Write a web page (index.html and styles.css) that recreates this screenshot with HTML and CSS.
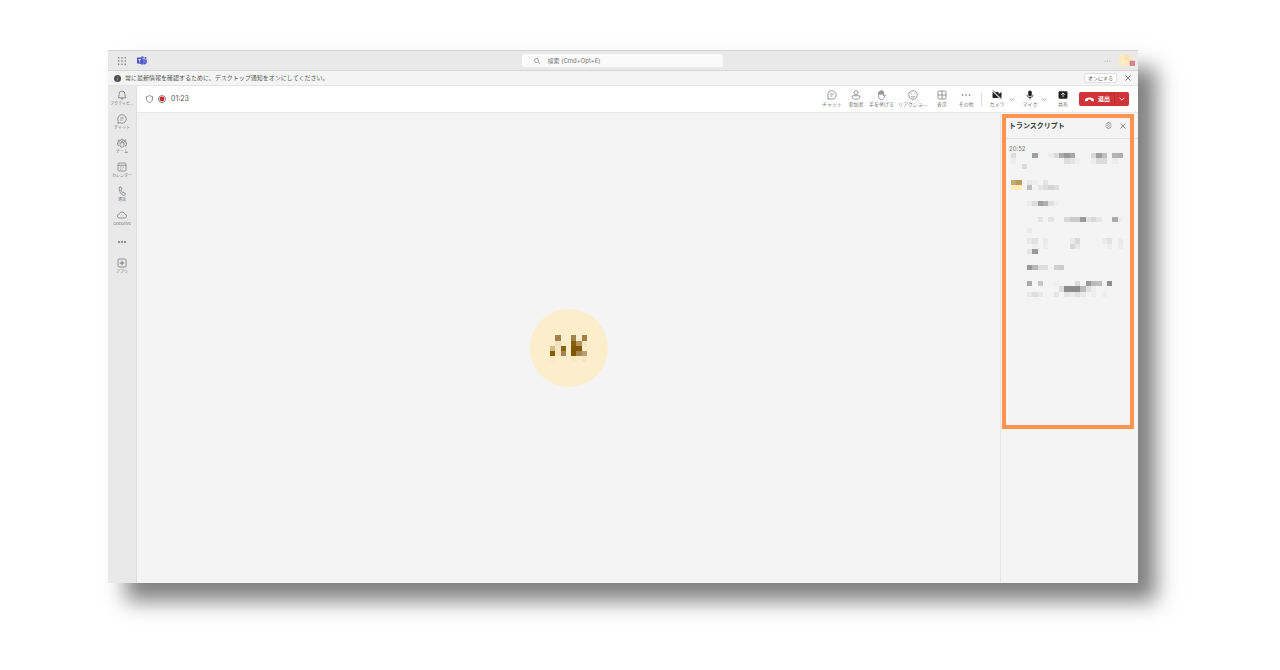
FILE: index.html
```html
<!DOCTYPE html>
<html lang="ja">
<head>
  <meta charset="UTF-8">
  <title>Teams</title>
  <meta name="viewport" content="width=device-width, initial-scale=1.0">
  <link rel="stylesheet" href="styles.css">
</head>
<body>
  <div class="window">
    <header class="titlebar">
      <div class="titlebar-left">
        <button class="icon-button" aria-label="アプリ起動ツール">
          <svg width="8" height="8" viewBox="0 0 8 8" fill="#888">
            <path d="M0 0h1.4v1.4H0zM3.3 0h1.4v1.4H3.3zM6.6 0H8v1.4H6.6zM0 3.3h1.4v1.4H0zM3.3 3.3h1.4v1.4H3.3zM6.6 3.3H8v1.4H6.6zM0 6.6h1.4V8H0zM3.3 6.6h1.4V8H3.3zM6.6 6.6H8V8H6.6z"/>
          </svg>
        </button>
        <svg class="logo" width="10" height="9" viewBox="0 0 20 18">
          <circle cx="17" cy="4" r="2.2" fill="#5b5fd0"/>
          <circle cx="11" cy="3" r="3" fill="#7b83eb"/>
          <path d="M12 7h7.500v5.500a3.500 3.500 0 0 1-7.500 1z" fill="#5b5fd0"/>
          <path d="M6 6.500h9.500V13a5 5 0 0 1-9.500 1.500z" fill="#6b72dd"/>
          <rect x="0" y="3" width="11" height="12" rx="1" fill="#4b53bc"/>
          <path d="M2.800 6h5.400v1.600H6.300V12.500H4.700V7.600H2.800z" fill="#fff"/>
        </svg>
      </div>
      <label class="search">
        <svg width="6" height="6" viewBox="0 0 12 12" fill="none" stroke="#888" stroke-width="1.5"><circle cx="5" cy="5" r="4"/><path d="M8 8l3.500 3.500"/></svg>
        <input type="text" aria-label="検索" placeholder="検索 (Cmd+Opt+E)">
      </label>
      <div class="titlebar-right">
        <button class="icon-button" aria-label="設定など">
          <svg width="7" height="2" viewBox="0 0 7 2" fill="#999"><circle cx="1" cy="1" r=".6"/><circle cx="3.500" cy="1" r=".6"/><circle cx="6" cy="1" r=".6"/></svg>
        </button>
        <svg class="profile" width="16" height="11" viewBox="0 0 3 2" preserveAspectRatio="none">
          <path d="M0 0h2v2H0z" fill="#fdebc0"/><path d="M1 0h1v1H1z" fill="#f8e3b0"/><path d="M2 1h1v1H2z" fill="#d9828a"/><path d="M2 0h1v1H2z" fill="#efe9dc"/>
        </svg>
      </div>
    </header>

    <div class="banner">
      <svg width="7" height="7" viewBox="0 0 14 14"><circle cx="7" cy="7" r="7" fill="#505050"/><path d="M6.300 6h1.400v5H6.300zM6.300 3.200h1.400v1.500H6.300z" fill="#aaa"/></svg>
      <span class="banner-text">常に最新情報を確認するために、デスクトップ通知をオンにしてください。</span>
      <button class="banner-action">オンにする</button>
      <button class="icon-button" aria-label="閉じる">
        <svg width="6" height="6" viewBox="0 0 6 6" stroke="#666" stroke-width=".8"><path d="M.5.5l5 5M5.500.5l-5 5"/></svg>
      </button>
    </div>

    <div class="body">
      <nav class="rail">
        <a href="#" class="rail-item">
          <svg class="icon" viewBox="0 0 20 20"><path d="M10 2a6 6 0 0 0-6 6v4l-1.500 3.500h15L16 12V8a6 6 0 0 0-6-6zM7.500 16a2.500 2.500 0 0 0 5 0"/></svg>
          アクティビ...
        </a>
        <a href="#" class="rail-item">
          <svg class="icon" viewBox="0 0 20 20"><path d="M10 1.500a8.500 8.500 0 1 1-4 16L1.500 18.500l1.200-4.300A8.500 8.500 0 0 1 10 1.500zM6.500 8h7M6.500 12h4.500"/></svg>
          チャット
        </a>
        <a href="#" class="rail-item">
          <svg class="icon" viewBox="0 0 20 20"><circle cx="10" cy="4.500" r="2.500"/><circle cx="3.800" cy="5.500" r="1.800"/><circle cx="16.200" cy="5.500" r="1.800"/><path d="M6 9.500h8v5a4 4 0 0 1-8 0zM4 15.500a3.500 3.500 0 0 1-3-3.500V9.500h3M16 15.500a3.500 3.500 0 0 0 3-3.500V9.500h-3"/></svg>
          チーム
        </a>
        <a href="#" class="rail-item">
          <svg class="icon" viewBox="0 0 20 20"><rect x="2" y="2" width="16" height="16" rx="2.500"/><path d="M2 6.500h16M6 10h1.500M9.300 10h1.500M12.600 10h1.500M6 14h1.500M9.300 14h1.500"/></svg>
          カレンダー
        </a>
        <a href="#" class="rail-item">
          <svg class="icon" viewBox="0 0 20 20"><path d="M5 2l2.500-.5 2 4.500-2 2c.5 2.500 2 4.500 4 5.500l2.500-1 3 3.500-1.500 2.500c-6 1.500-13-8.500-10.500-16.500z"/></svg>
          通話
        </a>
        <a href="#" class="rail-item">
          <svg class="icon" viewBox="0 0 20 20"><path d="M5 16a4 4 0 0 1-.3-8A5.500 5.500 0 0 1 15.300 8 4 4 0 0 1 15 16z"/></svg>
          OneDrive
        </a>
        <button class="rail-item rail-more" aria-label="その他のアプリ">
          <svg width="8" height="2" viewBox="0 0 8 2" fill="#666"><circle cx="1" cy="1" r=".9"/><circle cx="4" cy="1" r=".9"/><circle cx="7" cy="1" r=".9"/></svg>
        </button>
        <a href="#" class="rail-item">
          <svg class="icon" viewBox="0 0 20 20"><rect x="2" y="2" width="16" height="16" rx="2"/><path d="M10 5.500v9M5.500 10h9" stroke-width="2"/></svg>
          アプリ
        </a>
      </nav>

      <main class="meeting">
        <div class="toolbar">
          <div class="status">
            <svg width="7" height="8" viewBox="0 0 14 16" fill="none" stroke="#666" stroke-width="1.400"><path d="M7 1c2 1.500 4 2 6 2v5c0 3.500-2.500 5.500-6 7-3.500-1.500-6-3.500-6-7V3c2 0 4-.5 6-2z"/></svg>
            <svg width="8" height="8" viewBox="0 0 16 16"><circle cx="8" cy="8" r="7" fill="none" stroke="#555" stroke-width="1.400"/><circle cx="8" cy="8" r="4.800" fill="#d9232e"/></svg>
            <span>01:23</span>
          </div>

          <button class="tool">
            <svg class="icon" viewBox="0 0 20 20"><path d="M10 1.500a8.500 8.500 0 1 1-4 16L1.500 18.500l1.200-4.300A8.500 8.500 0 0 1 10 1.500zM6.500 8h7M6.500 12h4.500"/></svg>
            チャット
          </button>
          <button class="tool">
            <svg class="icon" viewBox="0 0 20 20"><circle cx="10" cy="5.500" r="4"/><path d="M4 11.500h12a2 2 0 0 1 2 2c0 3-3.500 5-8 5s-8-2-8-5a2 2 0 0 1 2-2z"/></svg>
            参加者
          </button>
          <button class="tool">
            <svg class="icon" viewBox="0 0 20 20"><path d="M5 11V5a1.200 1.200 0 0 1 2.500 0v4V3A1.200 1.200 0 0 1 10 3v6-7a1.200 1.200 0 0 1 2.500 0v7-5A1.200 1.200 0 0 1 15 4v8l2-2c1-1 2.500 0 1.800 1.200L15 17c-1 1.500-2.500 2-4.500 2C7 19 5 16 5 11z"/></svg>
            手を挙げる
          </button>
          <button class="tool tool-wide">
            <svg class="icon" viewBox="0 0 20 20"><circle cx="10" cy="10" r="8.500"/><path d="M6 12c2 3 6 3 8 0M6.500 7.500h1.500M12 7.500h1.500"/></svg>
            リアクショ...
          </button>
          <button class="tool">
            <svg class="icon" viewBox="0 0 20 20"><rect x="2" y="2" width="16" height="16" rx="2.500"/><path d="M10 2v16M2 10h16"/></svg>
            表示
          </button>
          <button class="tool">
            <svg class="icon solid" viewBox="0 0 20 20"><circle cx="3" cy="10" r="1.600"/><circle cx="10" cy="10" r="1.600"/><circle cx="17" cy="10" r="1.600"/></svg>
            その他
          </button>
          <div class="divider"></div>
          <button class="tool">
            <svg class="icon solid dark" viewBox="0 0 20 20"><path d="M1 4h11a2 2 0 0 1 1.500 2v2L19 4v12l-5.500-3.500V16H3a2 2 0 0 1-2-2z"/><path d="M1 1l17 17" stroke="#fff" stroke-width="3"/><path d="M2 .8l17 17" stroke="#222" stroke-width="1.600"/></svg>
            カメラ
          </button>
          <button class="chevron" aria-label="カメラのオプション"><svg width="5" height="3" viewBox="0 0 10 6"><path d="M1 1l4 4 4-4"/></svg></button>
          <button class="tool">
            <svg class="icon solid dark" viewBox="0 0 20 20"><rect x="6.500" y="1" width="7" height="12" rx="3.500"/><path d="M4 9.500c0 7.500 12 7.500 12 0M10 15v4" fill="none" stroke="#222" stroke-width="1.600"/></svg>
            マイク
          </button>
          <button class="chevron" aria-label="マイクのオプション"><svg width="5" height="3" viewBox="0 0 10 6"><path d="M1 1l4 4 4-4"/></svg></button>
          <button class="tool">
            <svg class="icon solid dark" viewBox="0 0 20 20"><rect x="1" y="2.500" width="18" height="15" rx="2.500"/><path d="M10 14V6.500M6.500 9.500L10 6l3.500 3.500" fill="none" stroke="#fff" stroke-width="1.600"/></svg>
            共有
          </button>
          <div class="leave">
            <button class="leave-main">
              <svg width="9" height="5" viewBox="0 0 18 8" fill="#fff"><path d="M9 0c5 0 9 2 9 5 0 2-.5 3-2 2.700l-3-.7c-1-.3-1-1-1-2.500-2-.8-4-.8-6 0C6 6 6 6.700 5 7l-3 .7C.5 8 0 7 0 5c0-3 4-5 9-5z"/></svg>
              退出
            </button>
            <button class="leave-menu" aria-label="退出のオプション"><svg width="6" height="4" viewBox="0 0 10 6"><path d="M1 1l4 4 4-4"/></svg></button>
          </div>
        </div>

        <div class="content">
          <section class="stage">
            <div class="avatar">
              <svg class="mosaic" id="initials" width="37" height="27" viewBox="0 0 7 5"></svg>
            </div>
          </section>

          <aside class="transcript">
            <div class="transcript-header">
              <h2>トランスクリプト</h2>
              <button class="icon-button" aria-label="トランスクリプトの設定">
                <svg width="7" height="7" viewBox="0 0 14 14" fill="none" stroke="#777" stroke-width="1.200"><path d="M5.500 1h3l.5 1.700 1.800-.4 1.500 2.600L11.200 7l1.100 2.100-1.500 2.600-1.800-.4-.5 1.700h-3L5 11.300l-1.800.4-1.500-2.600L2.800 7 1.700 4.900l1.500-2.600 1.800.4z"/><circle cx="7" cy="7" r="2"/></svg>
              </button>
              <button class="icon-button" aria-label="閉じる">
                <svg width="6" height="6" viewBox="0 0 6 6" stroke="#666" stroke-width=".8"><path d="M.5.5l5 5M5.500.5l-5 5"/></svg>
              </button>
            </div>
            <div class="transcript-body">
              <time>20:52</time>
              <svg class="mosaic entries" id="entries" width="112" height="144" viewBox="0 0 21 27"></svg>
            </div>
            <div class="highlight"></div>
          </aside>
        </div>
      </main>
    </div>
  </div>

  <script src="script.js"></script>
</body>
</html>
```

FILE: styles.css
```css
* {
  box-sizing: border-box;
}

body {
  margin: 0;
  padding: 50px 142px 87px 108px;
  height: 100vh;
  background: #fff;
  color: #555;
  font-family: Inter, "Noto Sans CJK JP", sans-serif;
  font-size: 6px;
  line-height: 8px;
}

button {
  margin: 0;
  padding: 0;
  border: none;
  background: none;
  color: inherit;
  font: inherit;
  cursor: pointer;
}

a {
  color: inherit;
  text-decoration: none;
}

svg {
  display: block;
  flex: none;
}

.window {
  display: flex;
  flex-direction: column;
  height: 100%;
  background: #f4f4f4;
  box-shadow: 18px 18px 20px rgba(0, 0, 0, 0.5);
}

.icon-button {
  display: flex;
  align-items: center;
  justify-content: center;
}

/* title bar */
.titlebar {
  display: grid;
  grid-template-columns: 1fr 201px 1fr;
  align-items: center;
  height: 21px;
  padding-right: 2px;
  background: #e9e9e9;
  border-top: 1px solid #d4d4d4;
  border-bottom: 1px solid #d6d6d6;
}

.titlebar-left,
.titlebar-right {
  display: flex;
  align-items: center;
}

.titlebar-left {
  gap: 11px;
  padding-left: 10px;
}

.titlebar-right {
  justify-content: flex-end;
  gap: 8px;
  padding-right: 1px;
}

.search {
  display: flex;
  align-items: center;
  gap: 8px;
  height: 13px;
  padding: 0 12px;
  background: #fafafa;
  border-radius: 2px;
}

.search input {
  flex: 1;
  min-width: 0;
  padding: 0;
  border: none;
  outline: none;
  background: none;
  font: inherit;
}

.search input::placeholder {
  color: #777;
}

/* notification banner */
.banner {
  display: flex;
  align-items: center;
  height: 15px;
  padding: 0 7px 0 6px;
  border-bottom: 1px solid #e4e4e4;
}

.banner-text {
  flex: 1;
  padding-left: 4px;
}

.banner-action {
  width: 33px;
  height: 10px;
  margin-right: 8px;
  background: #fff;
  border: 1px solid #dedede;
  border-radius: 2px;
  font-size: 5px;
  line-height: 8px;
}

/* left rail */
.body {
  display: flex;
  flex: 1;
  min-height: 0;
}

.rail {
  display: flex;
  flex-direction: column;
  width: 29px;
  padding-top: 4px;
  background: #e9e9e9;
  border-right: 1px solid #dcdcdc;
}

.rail-item {
  display: flex;
  flex-direction: column;
  align-items: center;
  height: 24px;
  color: #777;
  font-size: 4px;
  line-height: 8px;
  white-space: nowrap;
}

.rail-more {
  padding-top: 7px;
}

.icon {
  width: 10px;
  height: 10px;
  fill: none;
  stroke: #777;
  stroke-width: 1.5;
}

.icon.solid {
  fill: #666;
  stroke: none;
}

.icon.dark {
  fill: #222;
}

/* meeting toolbar */
.meeting {
  display: flex;
  flex: 1;
  flex-direction: column;
  min-width: 0;
}

.toolbar {
  display: flex;
  align-items: center;
  height: 27px;
  padding-right: 9px;
  background: #fff;
  border-bottom: 1px solid #e8e8e8;
}

.status {
  display: flex;
  flex: 1;
  align-items: center;
  gap: 5px;
  padding-left: 9px;
  font-size: 7px;
}

.tool {
  display: flex;
  flex-direction: column;
  align-items: center;
  min-width: 24px;
  padding: 0 1px;
  color: #777;
  font-size: 5px;
  line-height: 8px;
  white-space: nowrap;
}

.tool-wide {
  min-width: 35px;
}

.divider {
  width: 1px;
  height: 14px;
  margin: 0 3px;
  background: #ddd;
}

.chevron {
  margin: 0 3px 0 0;
  width: 6px;
}

.chevron path,
.leave-menu path {
  fill: none;
  stroke: #888;
  stroke-width: 1.4;
}

.leave {
  display: flex;
  height: 14px;
  margin-left: 4px;
  border-radius: 2px;
  background: #d13438;
  color: #fff;
}

.leave-main {
  display: flex;
  align-items: center;
  gap: 4px;
  width: 35px;
  padding-left: 6px;
  font-weight: bold;
}

.leave-menu {
  display: flex;
  align-items: center;
  justify-content: center;
  width: 15px;
  border-left: 1px solid #c02a30;
}

.leave-menu path {
  stroke: #fff;
}

/* stage and transcript */
.content {
  display: flex;
  flex: 1;
  min-height: 0;
}

.stage {
  display: flex;
  flex: 1;
  align-items: center;
  justify-content: center;
}

.avatar {
  display: flex;
  align-items: center;
  justify-content: center;
  width: 78px;
  height: 78px;
  border-radius: 50%;
  background: #fdeecb;
}

.transcript {
  position: relative;
  width: 138px;
  border-left: 1px solid #e6e6e6;
}

.transcript-header {
  display: flex;
  align-items: center;
  gap: 8px;
  height: 26px;
  padding: 0 12px 0 8px;
  border-bottom: 1px solid #e2e2e2;
}

.transcript-header h2 {
  flex: 1;
  margin: 0;
  color: #333;
  font-size: 7px;
  line-height: 10px;
}

.transcript-body {
  padding: 6px 8px;
}

.transcript-body time {
  display: block;
  color: #777;
}

.entries {
  margin-left: 2px;
}

/* orange frame laid over the transcript panel */
.highlight {
  position: absolute;
  top: 1px;
  left: 1px;
  right: 4px;
  height: 315px;
  border: 4px solid #ff934f;
  pointer-events: none;
}
```

FILE: script.js
```js
// each cell: [column, row, colour]
const initials = [
  [1, 0, '#a3814a'], [4, 0, '#a38450'], [6, 0, '#a08048'],
  [1, 1, '#f0e0bc'], [2, 1, '#f9ebc6'], [4, 1, '#866010'], [5, 1, '#b3955a'], [6, 1, '#f6e6c0'],
  [0, 2, '#d1b988'], [1, 2, '#f6e6c0'], [2, 2, '#8a6418'], [4, 2, '#805800'], [5, 2, '#805800'],
  [0, 3, '#845c08'], [1, 3, '#f6e6c0'], [2, 3, '#a38450'], [4, 3, '#805800'], [5, 3, '#a58650'], [6, 3, '#b9a070'],
  [0, 4, '#fbe9c2'], [4, 4, '#fbe9c2'], [6, 4, '#f8e6c0']
];

const entries = [
  [0, 0, '#dcdcdc'], [4, 0, '#a0a0a0'], [7, 0, '#ededed'], [8, 0, '#dadada'], [9, 0, '#aaa'], [10, 0, '#999'], [11, 0, '#aaa'],
  [15, 0, '#d8d8d8'], [16, 0, '#a0a0a0'], [17, 0, '#c0c0c0'], [19, 0, '#b4b4b4'], [20, 0, '#b0b0b0'],
  [0, 1, '#eee'], [10, 1, '#ddd'], [11, 1, '#e4e4e4'], [12, 1, '#eee'], [15, 1, '#eee'], [16, 1, '#dcdcdc'], [17, 1, '#dcdcdc'], [19, 1, '#ececec'],
  [2, 2, '#dadada'],
  [0, 5, '#c4aa70'], [1, 5, '#b89c58'], [3, 5, '#e8e8e8'], [4, 5, '#eee'], [6, 5, '#e4e4e4'],
  [0, 6, '#fdebbb'], [1, 6, '#fdebbb'], [3, 6, '#bdbdbd'], [5, 6, '#e6e6e6'], [6, 6, '#dedede'], [7, 6, '#d4d4d4'], [8, 6, '#ddd'],
  [3, 9, '#ececec'], [4, 9, '#ddd'], [5, 9, '#a0a0a0'], [6, 9, '#b0b0b0'], [7, 9, '#e0e0e0'], [8, 9, '#eee'],
  [5, 12, '#e4e4e4'], [7, 12, '#e4e4e4'], [10, 12, '#d8d8d8'], [11, 12, '#ccc'], [12, 12, '#ccc'], [13, 12, '#999'],
  [14, 12, '#e2e2e2'], [15, 12, '#d8d8d8'], [16, 12, '#e6e6e6'], [19, 12, '#aaa'], [20, 12, '#eee'],
  [3, 14, '#ebebeb'],
  [3, 16, '#e8e8e8'], [4, 16, '#e0e0e0'], [6, 16, '#eaeaea'], [11, 16, '#eaeaea'], [12, 16, '#dadada'], [17, 16, '#ebebeb'], [18, 16, '#e2e2e2'], [20, 16, '#ebebeb'],
  [4, 17, '#eee'], [6, 17, '#ededed'], [11, 17, '#d8d8d8'], [12, 17, '#e8e8e8'], [18, 17, '#eee'], [20, 17, '#ededed'],
  [3, 18, '#e6e6e6'], [4, 18, '#999'],
  [3, 21, '#999'], [4, 21, '#b8b8b8'], [5, 21, '#dedede'], [6, 21, '#dedede'], [8, 21, '#d0d0d0'], [9, 21, '#ccc'],
  [3, 24, '#aaa'], [5, 24, '#c8c8c8'], [8, 24, '#eee'], [12, 24, '#dcdcdc'], [14, 24, '#999'], [15, 24, '#b8b8b8'], [16, 24, '#c0c0c0'], [18, 24, '#909090'],
  [9, 25, '#ddd'], [10, 25, '#8c8c8c'], [11, 25, '#8c8c8c'], [12, 25, '#8c8c8c'], [13, 25, '#bbb'], [14, 25, '#e2e2e2'], [15, 25, '#eee'],
  [3, 26, '#e8e8e8'], [4, 26, '#dedede'], [5, 26, '#e8e8e8'], [8, 26, '#e6e6e6'], [10, 26, '#e4e4e4'], [11, 26, '#eaeaea'], [12, 26, '#e0e0e0'], [13, 26, '#eaeaea'], [15, 26, '#eee'], [17, 26, '#eee']
];

function drawMosaic(id, cells) {
  document.getElementById(id).innerHTML = cells
    .map(([x, y, fill]) => `<rect x="${x}" y="${y}" width="1" height="1" fill="${fill}" shape-rendering="crispEdges"/>`)
    .join('');
}

drawMosaic('initials', initials);
drawMosaic('entries', entries);
```
